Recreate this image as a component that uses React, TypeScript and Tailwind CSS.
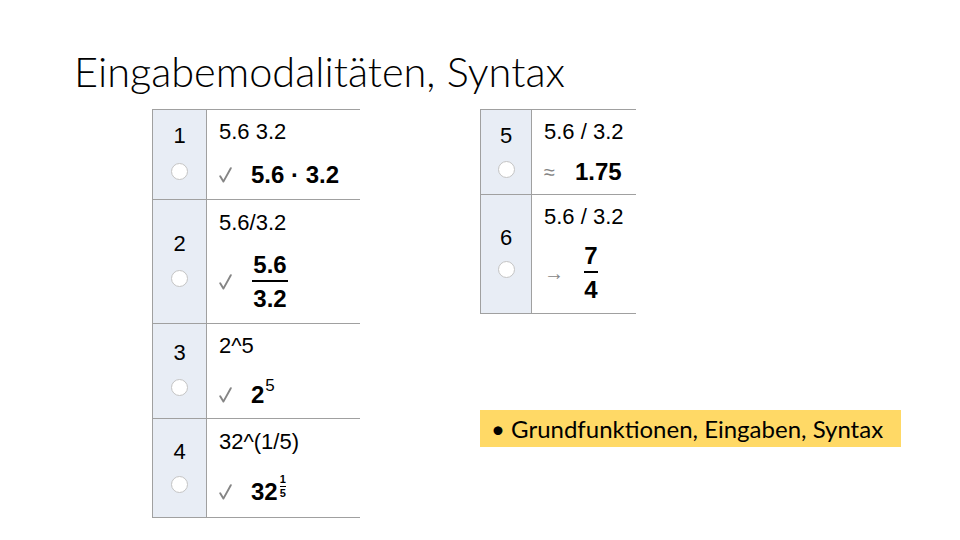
import React from "react";

const arial = { fontFamily: '"Liberation Sans", Arial, sans-serif' };

function Radio() {
  return <div className="w-[17px] h-[17px] rounded-full bg-white border border-[#c4c4c4] shrink-0" />;
}

function Check() {
  return (
    <svg width="13" height="16" viewBox="0 0 13 16" className="shrink-0">
      <path d="M1.2 9.2 L4.4 14.6 L11.8 1.2" fill="none" stroke="#858585" strokeWidth="1.9" strokeLinejoin="round" strokeLinecap="round" />
    </svg>
  );
}

function Frac({ n, d, w }: { n: string; d: string; w: string }) {
  return (
    <div className="flex flex-col items-center font-bold text-[24px] leading-none text-black" style={arial}>
      <span className="pb-[3px]">{n}</span>
      <span className={`${w} h-[1.5px] bg-black`} />
      <span className="pt-[5px]">{d}</span>
    </div>
  );
}

export default function App() {
  return (
    <div className="w-[960px] h-[540px] bg-white overflow-hidden flex flex-col" style={arial}>
      <div
        className="h-[109px] pl-[74px] pt-[51px] text-[41.5px] leading-none font-light text-black"
        style={{ fontFamily: 'Lato, "Open Sans", sans-serif' }}
      >
        Eingabemodalitäten, Syntax
      </div>
      <div className="flex flex-row pl-[152px]">
        {/* left table */}
        <div className="w-[208px] border-y border-l border-[#a0a0a0] flex flex-col text-black">
          {/* row 1 */}
          <div className="h-[90px] flex border-b border-[#a0a0a0]">
            <div className="w-[54px] bg-[#e8edf5] border-r border-[#a0a0a0] flex flex-col items-center pt-[15px] gap-[16px]">
              <span className="text-[22px] leading-none">1</span>
              <Radio />
            </div>
            <div className="flex-1 pl-[12px] pt-[11px] flex flex-col">
              <span className="text-[22px] leading-none">5.6 3.2</span>
              <div className="flex items-center mt-[20px]">
                <Check />
                <span className="ml-[19px] font-bold text-[24px] leading-none">5.6 · 3.2</span>
              </div>
            </div>
          </div>
          {/* row 2 */}
          <div className="h-[124px] flex border-b border-[#a0a0a0]">
            <div className="w-[54px] bg-[#e8edf5] border-r border-[#a0a0a0] flex flex-col items-center pt-[33px] gap-[15px]">
              <span className="text-[22px] leading-none">2</span>
              <Radio />
            </div>
            <div className="flex-1 pl-[12px] pt-[12px] flex flex-col">
              <span className="text-[22px] leading-none">5.6/3.2</span>
              <div className="flex items-center mt-[19px]">
                <Check />
                <div className="ml-[20px]">
                  <Frac n="5.6" d="3.2" w="w-[36px]" />
                </div>
              </div>
            </div>
          </div>
          {/* row 3 */}
          <div className="h-[95px] flex border-b border-[#a0a0a0]">
            <div className="w-[54px] bg-[#e8edf5] border-r border-[#a0a0a0] flex flex-col items-center pt-[18px] gap-[15px]">
              <span className="text-[22px] leading-none">3</span>
              <Radio />
            </div>
            <div className="flex-1 pl-[12px] pt-[11px] flex flex-col">
              <span className="text-[22px] leading-none">2^5</span>
              <div className="flex items-center mt-[26px]">
                <Check />
                <div className="ml-[19px] flex items-start">
                  <span className="font-bold text-[24px] leading-none">2</span>
                  <span className="text-[17px] leading-none mt-[-6px] ml-[1px]">5</span>
                </div>
              </div>
            </div>
          </div>
          {/* row 4 */}
          <div className="h-[98px] flex">
            <div className="w-[54px] bg-[#e8edf5] border-r border-[#a0a0a0] flex flex-col items-center pt-[22px] gap-[13px]">
              <span className="text-[22px] leading-none">4</span>
              <Radio />
            </div>
            <div className="flex-1 pl-[12px] pt-[12px] flex flex-col">
              <span className="text-[22px] leading-none">32^(1/5)</span>
              <div className="flex items-center mt-[27px]">
                <Check />
                <div className="ml-[19px] flex items-start">
                  <span className="font-bold text-[24px] leading-none">32</span>
                  <div className="flex flex-col items-center mt-[-6px] ml-[2px] text-[11px] leading-none font-bold">
                    <span>1</span>
                    <span className="w-[6px] h-px bg-black my-[1px]" />
                    <span>5</span>
                  </div>
                </div>
              </div>
            </div>
          </div>
        </div>

        {/* right column */}
        <div className="ml-[120px] flex flex-col">
          <div className="w-[156px] border-y border-l border-[#a0a0a0] flex flex-col text-black">
            {/* row 5 */}
            <div className="h-[85px] flex border-b border-[#a0a0a0]">
              <div className="w-[51px] bg-[#e8edf5] border-r border-[#a0a0a0] flex flex-col items-center pt-[15px] gap-[14px]">
                <span className="text-[22px] leading-none">5</span>
                <Radio />
              </div>
              <div className="flex-1 pl-[12px] pt-[11px] flex flex-col">
                <span className="text-[22px] leading-none">5.6 / 3.2</span>
                <div className="flex items-center mt-[17px]">
                  <span className="text-[#858585] text-[20px] leading-none">≈</span>
                  <span className="ml-[20px] font-bold text-[24px] leading-none">1.75</span>
                </div>
              </div>
            </div>
            {/* row 6 */}
            <div className="h-[118px] flex">
              <div className="w-[51px] bg-[#e8edf5] border-r border-[#a0a0a0] flex flex-col items-center pt-[32px] gap-[12px]">
                <span className="text-[22px] leading-none">6</span>
                <Radio />
              </div>
              <div className="flex-1 pl-[12px] pt-[11px] flex flex-col">
                <span className="text-[22px] leading-none">5.6 / 3.2</span>
                <div className="flex items-center mt-[16px]">
                  <span className="text-[#858585] text-[20px] leading-none">→</span>
                  <div className="ml-[20px]">
                    <Frac n="7" d="4" w="w-[14px]" />
                  </div>
                </div>
              </div>
            </div>
          </div>
          <div
            className="mt-[96px] w-[421px] h-[37px] bg-[#ffd966] flex items-center pl-[11px] text-[24px] text-black leading-none"
            style={{ fontFamily: 'Lato, "Open Sans", sans-serif' }}
          >
            • Grundfunktionen, Eingaben, Syntax
          </div>
        </div>
      </div>
    </div>
  );
}
